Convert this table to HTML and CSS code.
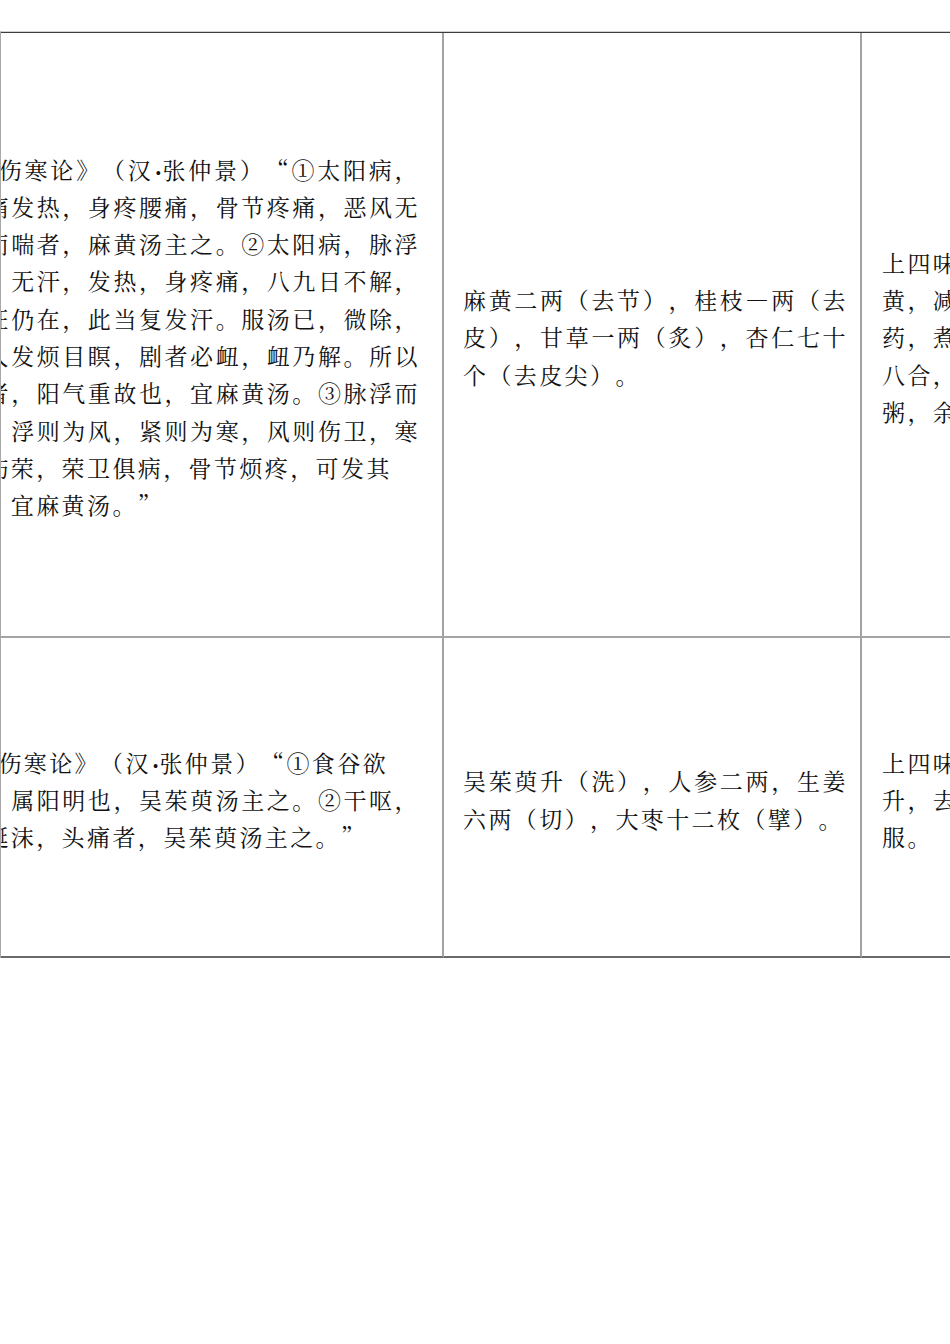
FILE: index.html
```html
<!DOCTYPE html>
<html lang="zh-CN">
<head>
<meta charset="utf-8">
<title>方剂表</title>
<link rel="stylesheet" href="styles.css">
</head>
<body>
<div class="page">
  <div class="grid">
    <div class="cell c1 r1">
      <div class="txt t1">
        <div class="ln first j">《伤寒论》（汉<span class="dot">•</span>张仲景）<span class="q">“</span>①太阳病，</div>
        <div class="ln j">头痛发热，身疼腰痛，骨节疼痛，恶风无</div>
        <div class="ln j">汗而喘者，麻黄汤主之。②太阳病，脉浮</div>
        <div class="ln j">紧，无汗，发热，身疼痛，八九日不解，</div>
        <div class="ln j">表证仍在，此当复发汗。服汤已，微除，</div>
        <div class="ln j">其人发烦目瞑，剧者必衄，衄乃解。所以</div>
        <div class="ln j">然者，阳气重故也，宜麻黄汤。③脉浮而</div>
        <div class="ln j">紧，浮则为风，紧则为寒，风则伤卫，寒</div>
        <div class="ln">则伤荣，荣卫俱病，骨节烦疼，可发其</div>
        <div class="ln">汗，宜麻黄汤。<span class="q">”</span></div>
      </div>
    </div>
    <div class="cell c2 r1">
      <div class="txt t2">
        <div class="ln j">麻黄二两（去节），桂枝—两（去</div>
        <div class="ln j">皮），甘草一两（炙），杏仁七十</div>
        <div class="ln">个（去皮尖）。</div>
      </div>
    </div>
    <div class="cell c3 r1">
      <div class="txt t3">
        <div class="ln">上四味，以水九升，先煮麻</div>
        <div class="ln">黄，减二升，去上沫，内诸</div>
        <div class="ln">药，煮取二升半，去滓，温服</div>
        <div class="ln">八合，覆取微似汗，不须啜</div>
        <div class="ln">粥，余如桂枝法将息。</div>
      </div>
    </div>
    <div class="cell c1 r2">
      <div class="txt t1">
        <div class="ln first">《伤寒论》（汉<span class="dot">•</span>张仲景）<span class="q">“</span>①食谷欲</div>
        <div class="ln j">呕，属阳明也，吴茱萸汤主之。②干呕，</div>
        <div class="ln">吐涎沫，头痛者，吴茱萸汤主之。<span class="q">”</span></div>
      </div>
    </div>
    <div class="cell c2 r2">
      <div class="txt t2">
        <div class="ln j">吴茱萸升（洗），人参二两，生姜</div>
        <div class="ln">六两（切），大枣十二枚（擘）。</div>
      </div>
    </div>
    <div class="cell c3 r2">
      <div class="txt t3">
        <div class="ln">上四味，以水七升，煮取二</div>
        <div class="ln">升，去滓，温服七合，日三</div>
        <div class="ln">服。</div>
      </div>
    </div>
  </div>
</div>
</body>
</html>
```

FILE: styles.css
```css
html, body {
  margin: 0;
  padding: 0;
  background: #ffffff;
}

body {
  width: 950px;
  height: 1344px;
  overflow: hidden;
  font-family: "Noto Serif CJK SC", "Noto Sans CJK SC", "Liberation Serif", serif;
  color: #111111;
}

.page {
  margin-top: 31px;
  width: 949px;
  overflow: hidden;
  border-top: 1px solid #d0d0d0;
  border-left: 1px solid #a8a8a8;
}

.grid {
  display: grid;
  grid-template-columns: 503px 418px 400px;
  grid-template-rows: 605px 320px;
  margin-left: -60px;
  width: 1321px;
  border-top: 1px solid #3c3c3c;
}

.cell {
  box-sizing: border-box;
  border-right: 2px solid #a3a3a3;
  border-bottom: 2px solid #a3a3a3;
  display: flex;
  align-items: center;
  padding-top: 5px;
}

.r2 {
  border-bottom: 2px solid #6a6a6a;
}

.c1 {
  padding-left: 19px;
}

.c2 {
  padding-left: 19px;
}

.c3 {
  padding-left: 20px;
  border-right: none;
}

.txt {
  font-size: 23px;
  line-height: 37.3px;
  letter-spacing: 2.4px;
  text-spacing-trim: space-all;
}

.t1 {
  width: 460px;
}

.t2 {
  width: 385px;
}

.t3 {
  width: 360px;
}

.ln {
  white-space: nowrap;
}

.ln.j {
  text-align: justify;
  text-align-last: justify;
}

.ln.first {
  padding-left: 13px;
}

.q {
  font-feature-settings: "fwid" 1;
}

.dot {
  font-family: "Liberation Serif", serif;
  font-size: 16px;
  line-height: 0;
  letter-spacing: 0;
  padding: 0 1px 0 2px;
}
```
